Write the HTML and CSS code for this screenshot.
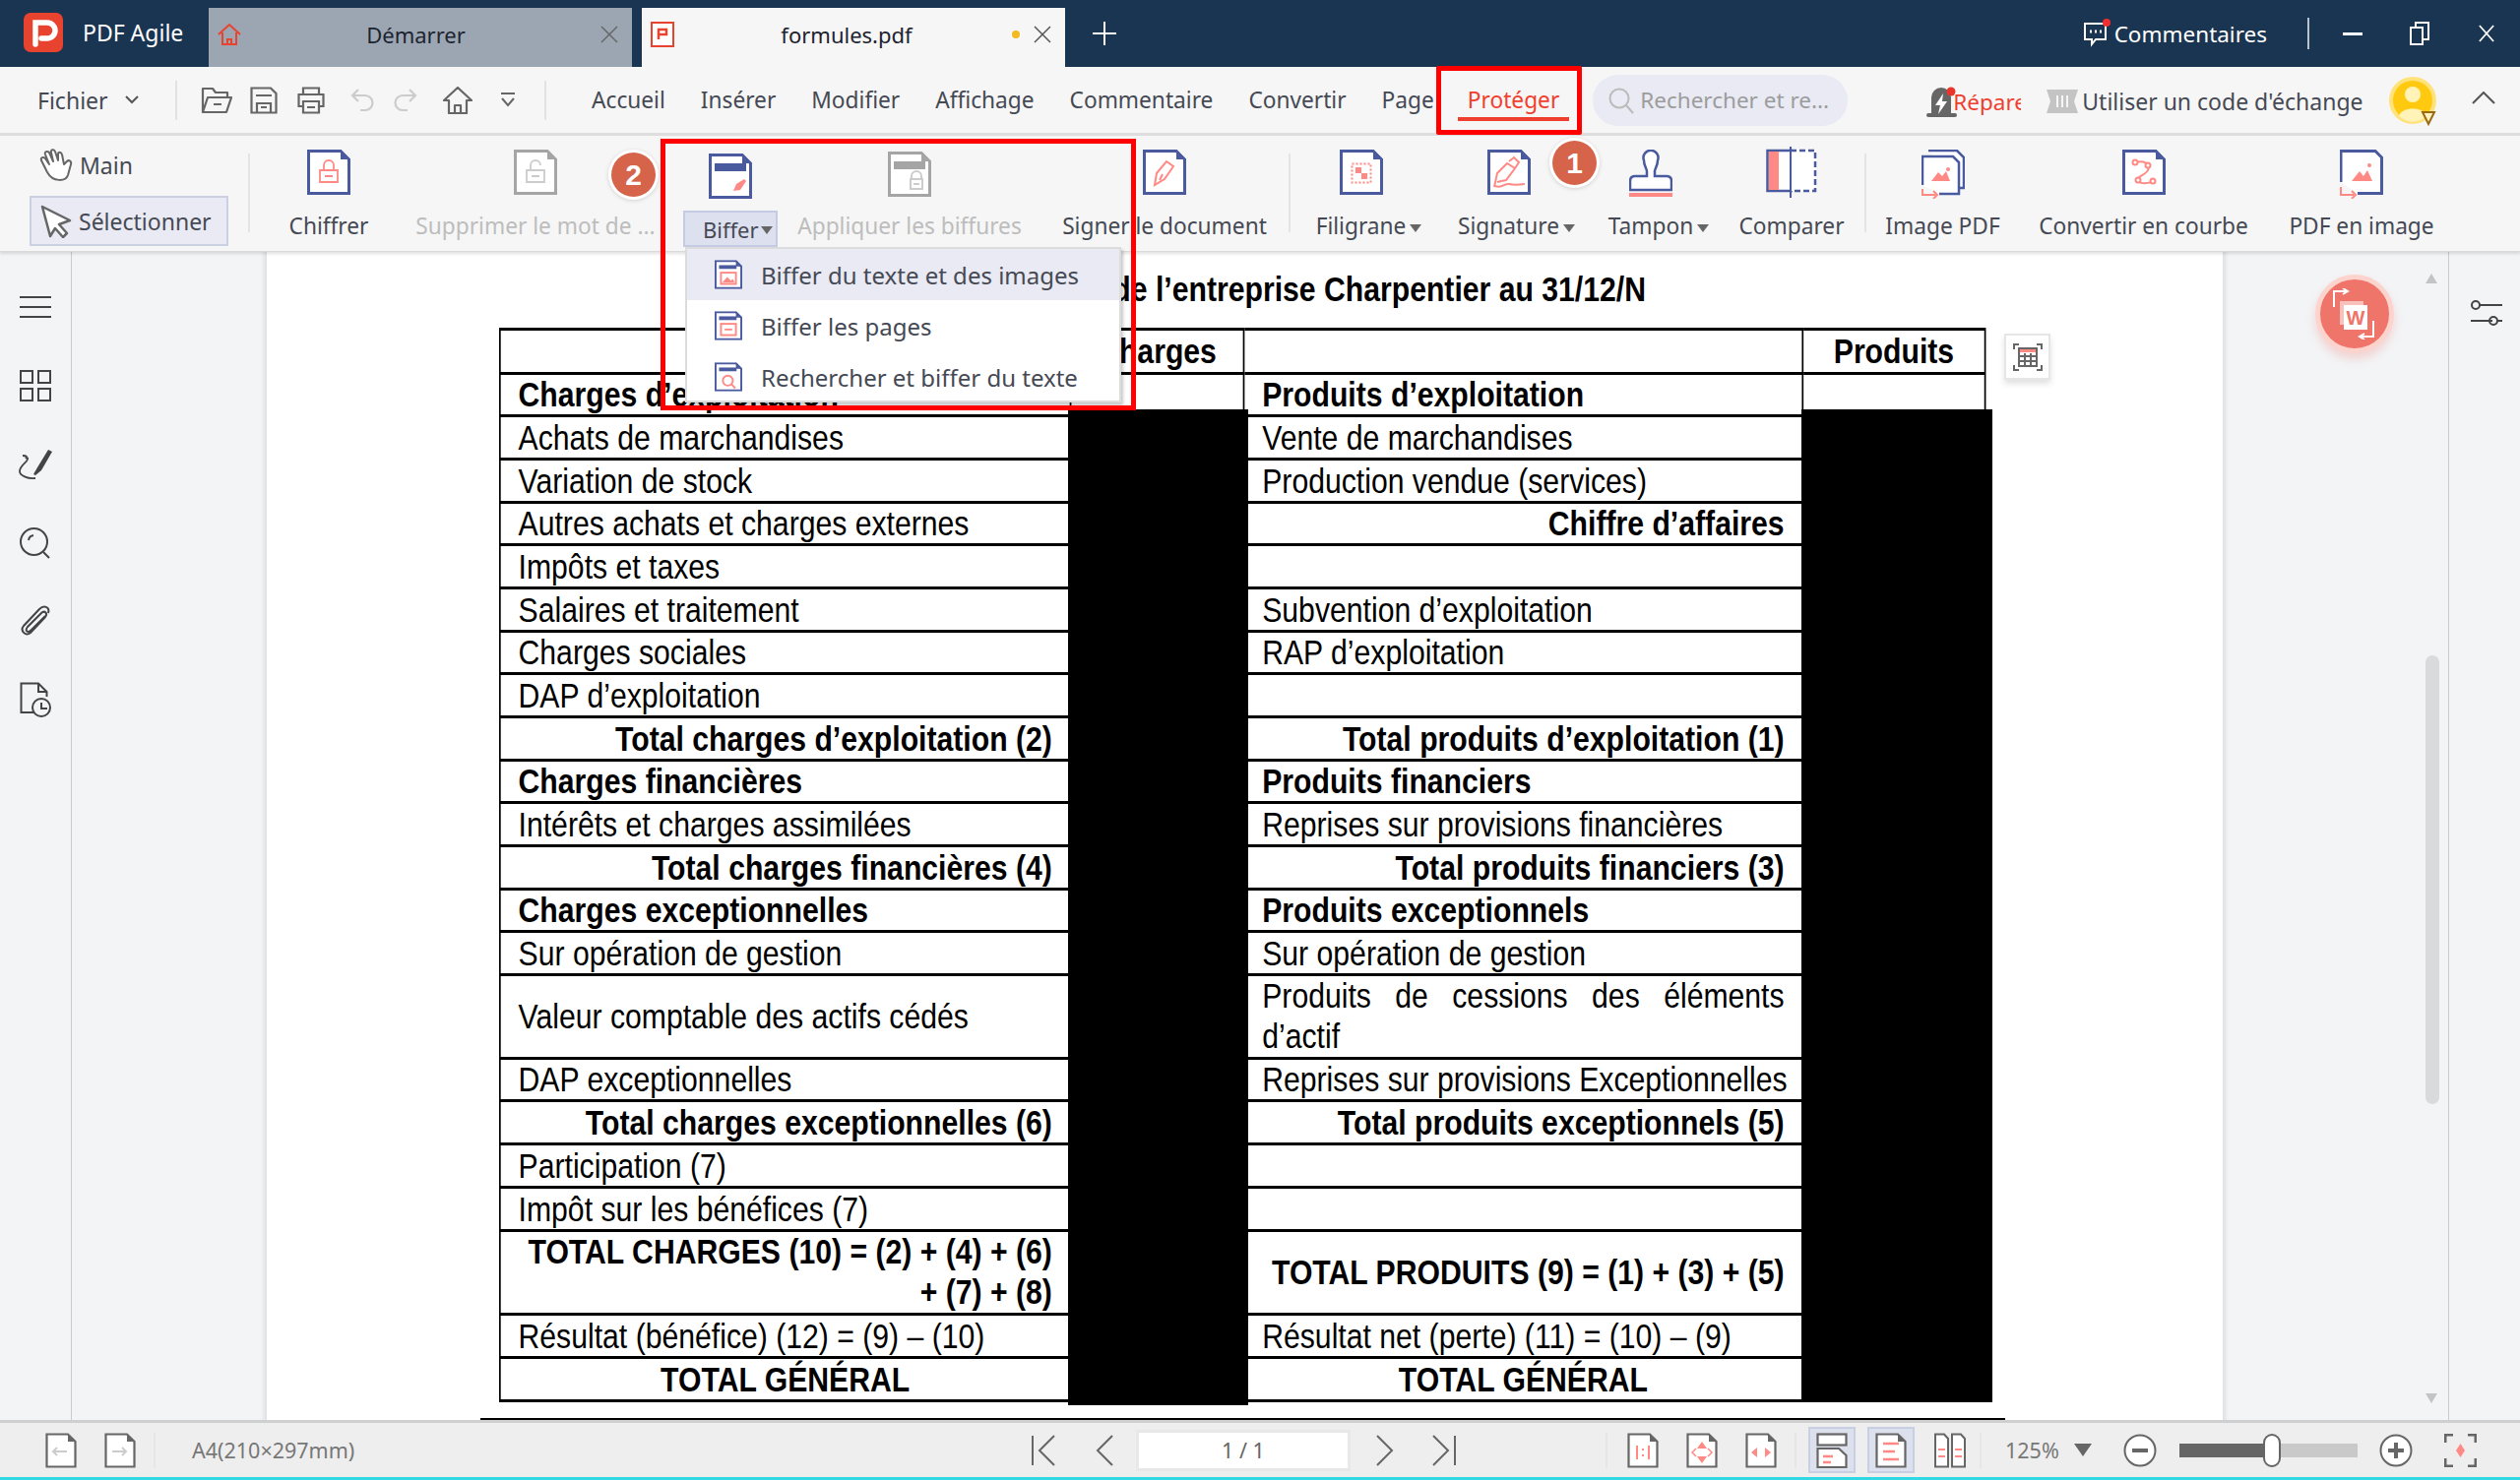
FILE: index.html
```html
<!DOCTYPE html>
<html lang="fr">
<head>
<meta charset="utf-8">
<title>PDF Agile</title>
<link rel="stylesheet" href="styles.css">
</head>
<body>
<svg class="defs" width="0" height="0" aria-hidden="true">
  <symbol id="doc" viewBox="0 0 44 46"><path d="M1.5 1.5H34L42.5 10V44.5H1.5Z" fill="#fff" stroke="#4a5a9e" stroke-width="3"/><path d="M34 0L44 10H34Z" fill="#4a5a9e"/></symbol>
  <symbol id="docg" viewBox="0 0 44 46"><path d="M1.5 1.5H34L42.5 10V44.5H1.5Z" fill="#fff" stroke="#a5a5a5" stroke-width="3"/><path d="M34 0L44 10H34Z" fill="#a5a5a5"/></symbol>
  <symbol id="sdoc" viewBox="0 0 32 36"><path d="M1.5 1.5H23L30.500 9V34.500H1.500Z" fill="#fff" stroke="#666" stroke-width="2.200"/><path d="M23 1L31 9H23Z" fill="#666"/></symbol>
</svg>

<header class="titlebar">
  <div class="app">
    <svg class="logo" viewBox="0 0 40 40"><rect width="40" height="40" rx="7" fill="#e8432f"/><path d="M12 32V10H24A8 8 0 0 1 24 26H18" fill="none" stroke="#fff" stroke-width="5.500" stroke-linecap="round"/></svg>
    <span class="app-name">PDF Agile</span>
  </div>
  <div class="tab tab-off">
    <svg class="tab-ico" width="24" height="24" viewBox="0 0 24 24"><path d="M1 12L12 2L23 12M5 10V22H19V10M10 22V17H14V22" fill="none" stroke="#e8432f" stroke-width="2"/></svg>
    <span class="tab-label">Démarrer</span>
    <svg class="tab-x" width="18" height="18" viewBox="0 0 18 18"><path d="M1 1L17 17M17 1L1 17" stroke="#666" stroke-width="1.500"/></svg>
  </div>
  <div class="tab tab-on">
    <svg class="tab-ico" width="24" height="26" viewBox="0 0 24 26"><rect x="1" y="1" width="22" height="24" fill="#fff" stroke="#e8432f" stroke-width="2"/><path d="M8 18V8H16V13H9" fill="none" stroke="#e8432f" stroke-width="2.500"/></svg>
    <span class="tab-label">formules.pdf</span>
    <i class="tab-dot"></i>
    <svg class="tab-x" width="18" height="18" viewBox="0 0 18 18"><path d="M1 1L17 17M17 1L1 17" stroke="#555" stroke-width="1.500"/></svg>
  </div>
  <svg class="tab-plus" width="24" height="24" viewBox="0 0 24 24"><path d="M12 0V24M0 12H24" stroke="#fff" stroke-width="2"/></svg>
  <div class="title-right">
    <svg width="30" height="30" viewBox="0 0 30 30"><path d="M3 6H24V22H14L10 27V22H3Z" fill="#1a3552" stroke="#fff" stroke-width="2"/><path d="M8 14H10M13 14H15M18 14H20" stroke="#fff" stroke-width="3"/><circle cx="25" cy="5" r="4" fill="#ef2f2f"/></svg>
    <span class="title-comments">Commentaires</span>
    <i class="title-sep"></i>
    <svg class="win-min" width="20" height="3" viewBox="0 0 20 3"><rect width="20" height="3" fill="#fff"/></svg>
    <svg class="win-max" width="20" height="24" viewBox="0 0 20 24"><path d="M6 6V1H19V18H13M1 6H13V23H1Z" fill="none" stroke="#fff" stroke-width="2"/></svg>
    <svg class="win-x" width="16" height="20" viewBox="0 0 18 20"><path d="M1 1L17 19M17 1L1 19" stroke="#fff" stroke-width="2"/></svg>
  </div>
</header>

<nav class="menubar">
  <span class="fichier">Fichier</span>
  <svg class="chev" width="14" height="9" viewBox="0 0 14 9"><path d="M1 1L7 7L13 1" fill="none" stroke="#555" stroke-width="2"/></svg>
  <i class="vsep vsep-a"></i>
  <div class="qa">
    <svg width="32" height="28" viewBox="0 0 32 28"><path d="M2 26V2H12L15 6H27V11M2 26H26L31 11H7Z" fill="none" stroke="#666" stroke-width="2.200" stroke-linejoin="round"/><path d="M13 18H21" stroke="#666" stroke-width="2"/></svg>
    <svg width="28" height="28" viewBox="0 0 28 28"><path d="M1.500 1.500H21L26.500 7V26.500H1.500Z" fill="none" stroke="#666" stroke-width="2.200"/><path d="M6 9H22M7 26V17H21V26M11 21H17" fill="none" stroke="#666" stroke-width="2.200"/></svg>
    <svg width="28" height="28" viewBox="0 0 28 28"><path d="M6 8V1.500H22V8M6 20H1.500V8H26.500V20H22M6 15H22V26.500H6Z" fill="none" stroke="#666" stroke-width="2.200"/><path d="M10 21H18" stroke="#666" stroke-width="2"/></svg>
    <svg width="24" height="24" viewBox="0 0 24 24"><path d="M8 1L2 7L8 13M2 7H15A7.500 7.500 0 0 1 15 22H10" fill="none" stroke="#ccc" stroke-width="2.200"/></svg>
    <svg width="24" height="24" viewBox="0 0 24 24"><path d="M16 1L22 7L16 13M22 7H9A7.500 7.500 0 0 0 9 22H14" fill="none" stroke="#ccc" stroke-width="2.200"/></svg>
    <svg width="30" height="28" viewBox="0 0 30 28"><path d="M1 14L15 1L29 14H24V27H6V14ZM12 27V19H18V27" fill="none" stroke="#666" stroke-width="2.200" stroke-linejoin="round"/></svg>
    <svg class="qa-more" width="16" height="16" viewBox="0 0 16 16"><path d="M1 1H15M2 6L8 13L14 6" fill="none" stroke="#666" stroke-width="2"/></svg>
  </div>
  <i class="vsep vsep-b"></i>
  <div class="menu-items">
    <span>Accueil</span><span>Insérer</span><span>Modifier</span><span>Affichage</span><span>Commentaire</span><span>Convertir</span><span>Page</span>
  </div>
  <span class="menu-active">Protéger</span>
  <div class="search">
    <svg width="26" height="28" viewBox="0 0 26 28"><circle cx="11" cy="12" r="9.500" fill="none" stroke="#bbb" stroke-width="2"/><path d="M18 19L25 27" stroke="#bbb" stroke-width="2"/></svg>
    <span>Rechercher et re...</span>
  </div>
  <svg class="repair-ico" width="34" height="34" viewBox="0 0 34 34"><path d="M6 29V12A10 10 0 0 1 26 12V29Z" fill="#666"/><rect x="1" y="28" width="31" height="4" rx="2" fill="#666"/><path d="M18 8L10 20H15L13 29L22 16H17Z" fill="#fff"/><circle cx="26" cy="6" r="4.500" fill="#e8342a"/></svg>
  <span class="repair-text">Réparer</span>
  <svg class="ticket" width="32" height="24" viewBox="0 0 32 24"><path d="M0 0H32L28 12L32 24H0L4 12Z" fill="#c4c4c4"/><path d="M11 6V18M16 6V18M21 6V18" stroke="#f6f6f6" stroke-width="2"/></svg>
  <span class="code-text">Utiliser un code d'échange</span>
  <svg class="avatar" width="48" height="50" viewBox="0 0 48 50"><circle cx="24" cy="24" r="24" fill="#ffe27a"/><circle cx="24" cy="24" r="20" fill="#ffc90f"/><circle cx="24" cy="18" r="8" fill="#fff3b8"/><path d="M10 40C12 30 36 30 38 40A20 20 0 0 1 10 40Z" fill="#fff3b8"/><path d="M34 36H46L40 48Z" fill="#fff2c0" stroke="#9a6a10" stroke-width="2"/></svg>
  <svg class="collapse" width="24" height="13" viewBox="0 0 24 13"><path d="M1 12L12 1L23 12" fill="none" stroke="#555" stroke-width="2"/></svg>
</nav>

<section class="ribbon">
  <div class="ribbon-left">
    <div class="hand-row">
      <svg width="34" height="34" viewBox="0 0 34 34"><path d="M8 24L2 12C1 9 4 8 6 10L10 16L6 6C5 3 8 2 10 4L14 13L12 4C11 1 15 0 16 3L19 12L19 6C19 3 22 3 23 6L25 16L28 13C30 11 33 13 32 16L29 27C27 33 14 35 8 24Z" fill="#fff" stroke="#666" stroke-width="2" stroke-linejoin="round"/></svg>
      <span>Main</span>
    </div>
    <div class="select-btn">
      <svg width="32" height="34" viewBox="0 0 32 34"><path d="M2 2L30 16L19 20L27 29L23 33L15 24L10 32Z" fill="#fff" stroke="#666" stroke-width="2.500" stroke-linejoin="round"/></svg>
      <span>Sélectionner</span>
    </div>
  </div>

  <div class="ri ri-chiffrer">
    <svg width="44" height="46"><use href="#doc"/><path d="M17 21V16A5 5 0 0 1 27 16V21M13 21H31V33H13ZM18 27H26" fill="none" stroke="#ff8a85" stroke-width="1.800"/></svg>
    <span class="lbl">Chiffrer</span>
  </div>
  <div class="ri ri-supprimer">
    <svg width="44" height="46"><use href="#docg"/><path d="M17 21V16A5 5 0 0 1 27 16M13 21H31V33H13ZM18 27H26" fill="none" stroke="#ccc" stroke-width="1.800"/></svg>
    <span class="lbl off">Supprimer le mot de ...</span>
  </div>
  <div class="ri ri-biffer">
    <svg class="ico-low" width="44" height="46"><use href="#doc"/><rect x="6" y="10" width="32" height="8" fill="#4a5a9e"/><path d="M25 38L28 31L36 26L38 28L32 37Z" fill="#ff8a85"/></svg>
    <span class="lbl biffer-btn drop">Biffer</span>
  </div>
  <div class="ri ri-appliquer">
    <svg class="ico-mid" width="44" height="46"><use href="#docg"/><rect x="6" y="10" width="32" height="8" fill="#a5a5a5"/><path d="M24 28V25A5 5 0 0 1 34 25V28M23 28H35V38H23ZM26 33H32" fill="none" stroke="#ccc" stroke-width="2"/></svg>
    <span class="lbl off">Appliquer les biffures</span>
  </div>
  <div class="ri ri-signer">
    <svg width="44" height="46"><use href="#doc"/><path d="M12 36L14 24L24 12L31 17L22 30ZM17 31L20 25" fill="none" stroke="#ff8a85" stroke-width="2"/></svg>
    <span class="lbl">Signer le document</span>
  </div>
  <i class="rsep rsep-a"></i>
  <div class="ri ri-filigrane">
    <svg width="44" height="46"><use href="#doc"/><rect x="12.500" y="14.500" width="19" height="19" fill="none" stroke="#ff8a85" stroke-width="2" stroke-dasharray="2 2"/><rect x="16" y="18" width="6" height="6" fill="#ff8a85"/><rect x="22" y="24" width="6" height="6" fill="#ff8a85"/></svg>
    <span class="lbl drop">Filigrane</span>
  </div>
  <div class="ri ri-signature">
    <svg width="44" height="46"><use href="#doc"/><path d="M7 38L10 24L20 14L28 19L19 31L10 33M22 12L27 8L32 13L28 19" fill="none" stroke="#ff8a85" stroke-width="2"/><path d="M8 37C14 40 18 34 22 35C26 36 30 36 38 35" fill="none" stroke="#ff8a85" stroke-width="2"/></svg>
    <span class="lbl drop">Signature</span>
  </div>
  <div class="ri ri-tampon">
    <svg width="44" height="48" viewBox="0 0 44 48"><path d="M15 11A7.500 7.500 0 1 1 29 11C29 17 26 19 26 22V27H38C41 27 43 28 43 32V41H1V32C1 28 3 27 6 27H18V22C18 19 15 17 15 11Z" fill="#fff" stroke="#4a5a9e" stroke-width="2.500"/><rect y="44" width="44" height="4" fill="#ff8a85"/></svg>
    <span class="lbl drop">Tampon</span>
  </div>
  <div class="ri ri-comparer">
    <svg width="52" height="54" viewBox="0 0 52 54"><rect x="1.500" y="5" width="24" height="41" fill="#fff" stroke="#4a5a9e" stroke-width="2.500"/><rect x="3" y="6" width="10" height="39" fill="#ff8a85"/><path d="M25 5H50V46H25" fill="#fff" stroke="#4a5a9e" stroke-width="2.500" stroke-dasharray="6 3"/><path d="M25 1V53" stroke="#4a5a9e" stroke-width="2"/></svg>
    <span class="lbl">Comparer</span>
  </div>
  <i class="rsep rsep-b"></i>
  <div class="ri ri-image">
    <svg width="44" height="50" viewBox="0 0 44 50"><path d="M7 1H36L43 8V39H38" fill="#fff" stroke="#4a5a9e" stroke-width="2.500"/><path d="M1 36V7H32L38 13V45H18" fill="#fff" stroke="#4a5a9e" stroke-width="2.500"/><path d="M10 32L17 23L21 27L25 22L29 32Z" fill="#ff8a85"/><circle cx="27" cy="20" r="2" fill="#ff8a85"/><path d="M1 40V46H14M12 42L16 46L12 50" fill="none" stroke="#ff8a85" stroke-width="2"/></svg>
    <span class="lbl">Image PDF</span>
  </div>
  <div class="ri ri-courbe">
    <svg width="44" height="46"><use href="#doc"/><path d="M13 13C22 11 29 14 26 21C24 26 14 27 16 32C18 35 27 35 31 32" fill="none" stroke="#ff8a85" stroke-width="2"/><circle cx="13" cy="13" r="2.500" fill="#fff" stroke="#ff8a85" stroke-width="2"/><circle cx="26" cy="16" r="2.500" fill="#fff" stroke="#ff8a85" stroke-width="2"/><circle cx="16" cy="31" r="2.500" fill="#fff" stroke="#ff8a85" stroke-width="2"/><circle cx="31" cy="32" r="2.500" fill="#fff" stroke="#ff8a85" stroke-width="2"/></svg>
    <span class="lbl">Convertir en courbe</span>
  </div>
  <div class="ri ri-pdfimg">
    <svg width="44" height="50" viewBox="0 0 44 50"><path d="M1 33V1.500H36L42.500 8V44.500H18" fill="#fff" stroke="#4a5a9e" stroke-width="3"/><path d="M12 32L20 22L24 27L28 21L33 32Z" fill="#ff8a85"/><circle cx="30" cy="16" r="2" fill="#ff8a85"/><path d="M1 38V46H14M12 42L16 46L12 50" fill="none" stroke="#ff8a85" stroke-width="2"/></svg>
    <span class="lbl">PDF en image</span>
  </div>
  <b class="badge badge-two">2</b>
  <b class="badge badge-one">1</b>
</section>

<main class="workspace">
  <aside class="leftbar">
    <svg width="32" height="22" viewBox="0 0 32 22"><path d="M0 1H32M0 11H32M0 21H32" stroke="#444" stroke-width="2"/></svg>
    <svg width="32" height="32" viewBox="0 0 32 32"><path d="M1 1H13V13H1ZM19 1H31V13H19ZM1 19H13V31H1ZM19 19H31V31H19Z" fill="none" stroke="#444" stroke-width="2"/></svg>
    <svg width="34" height="32" viewBox="0 0 34 32"><path d="M7 10C9 8 8 7 4 7M9 9C11 13 1 16 1 23C1 27 9 31 17 30" fill="none" stroke="#444" stroke-width="1.800"/><path d="M15 26L19 19L30 1L34 3L23 22L17 27Z" fill="#444"/></svg>
    <svg width="32" height="32" viewBox="0 0 32 32"><circle cx="14.500" cy="14.500" r="13.500" fill="none" stroke="#444" stroke-width="2"/><path d="M24 25L30 31M9 13A6 6 0 0 1 14 8" fill="none" stroke="#444" stroke-width="2"/></svg>
    <svg width="30" height="33" viewBox="0 0 30 33"><path d="M25 11L11 25C7 29 4 26 7 22L21 8C24 5 28 8 25 12L10 28C5 32 -1 26 3 21L19 4C23 0 30 1 28 8" fill="none" stroke="#444" stroke-width="2"/></svg>
    <svg width="32" height="36" viewBox="0 0 32 36"><path d="M14 31H1.500V1.500H19L27.500 10V15M19 1.500V10H27.500" fill="none" stroke="#444" stroke-width="2"/><circle cx="22" cy="26" r="9" fill="#f3f4f6" stroke="#444" stroke-width="2"/><path d="M22 21V27H28" fill="none" stroke="#444" stroke-width="2"/></svg>
  </aside>
  <div class="gutter-left"></div>

  <article class="page">
    <h1 class="doc-title">Compte de résultat de l’entreprise Charpentier au 31/12/N</h1>
    <table class="results">
      <colgroup><col class="c1"><col class="c2"><col class="c3"><col class="c4"></colgroup>
      <tr class="head"><th></th><th class="th-charges">Charges</th><th></th><th>Produits</th></tr>
      <tr><td class="st">Charges d’exploitation</td><td></td><td class="st">Produits d’exploitation</td><td></td></tr>
      <tr><td>Achats de marchandises</td><td></td><td>Vente de marchandises</td><td></td></tr>
      <tr><td>Variation de stock</td><td></td><td>Production vendue (services)</td><td></td></tr>
      <tr><td>Autres achats et charges externes</td><td></td><td class="st rt">Chiffre d’affaires</td><td></td></tr>
      <tr><td>Impôts et taxes</td><td></td><td></td><td></td></tr>
      <tr><td>Salaires et traitement</td><td></td><td>Subvention d’exploitation</td><td></td></tr>
      <tr><td>Charges sociales</td><td></td><td>RAP d’exploitation</td><td></td></tr>
      <tr><td>DAP d’exploitation</td><td></td><td></td><td></td></tr>
      <tr><td class="st rt">Total charges d’exploitation (2)</td><td></td><td class="st rt">Total produits d’exploitation (1)</td><td></td></tr>
      <tr><td class="st">Charges financières</td><td></td><td class="st">Produits financiers</td><td></td></tr>
      <tr><td>Intérêts et charges assimilées</td><td></td><td>Reprises sur provisions financières</td><td></td></tr>
      <tr><td class="st rt">Total charges financières (4)</td><td></td><td class="st rt">Total produits financiers (3)</td><td></td></tr>
      <tr><td class="st">Charges exceptionnelles</td><td></td><td class="st">Produits exceptionnels</td><td></td></tr>
      <tr><td>Sur opération de gestion</td><td></td><td>Sur opération de gestion</td><td></td></tr>
      <tr class="tall"><td>Valeur comptable des actifs cédés</td><td></td><td class="just">Produits de cessions des éléments d’actif</td><td></td></tr>
      <tr><td>DAP exceptionnelles</td><td></td><td>Reprises sur provisions Exceptionnelles</td><td></td></tr>
      <tr><td class="st rt">Total charges exceptionnelles (6)</td><td></td><td class="st rt">Total produits exceptionnels (5)</td><td></td></tr>
      <tr><td>Participation (7)</td><td></td><td></td><td></td></tr>
      <tr><td>Impôt sur les bénéfices (7)</td><td></td><td></td><td></td></tr>
      <tr class="tall"><td class="st rt">TOTAL CHARGES (10) = (2) + (4) + (6)<br>+ (7) + (8)</td><td></td><td class="st rt">TOTAL PRODUITS (9) = (1) + (3) + (5)</td><td></td></tr>
      <tr><td>Résultat (bénéfice) (12) = (9) – (10)</td><td></td><td>Résultat net (perte) (11) = (10) – (9)</td><td></td></tr>
      <tr><td class="st ct">TOTAL GÉNÉRAL</td><td></td><td class="st ct">TOTAL GÉNÉRAL</td><td></td></tr>
    </table>
    <div class="next-table"></div>
    <i class="redact redact-a"></i>
    <i class="redact redact-b"></i>
    <div class="calc-btn">
      <svg width="30" height="28" viewBox="0 0 30 28"><path d="M1 6V1H6M24 1H29V6M1 22V27H6M24 27H29V22" fill="none" stroke="#666" stroke-width="2"/><rect x="6" y="5" width="18" height="18" fill="#fff" stroke="#666" stroke-width="2"/><rect x="7" y="6" width="16" height="3" fill="#ff8a85"/><path d="M6 13H24M6 18H24M12 10V23M18 10V23" stroke="#666" stroke-width="2"/></svg>
    </div>
  </article>

  <div class="gutter-right">
    <i class="sb-up"></i>
    <i class="sb-thumb"></i>
    <i class="sb-down"></i>
    <div class="convert-fab">
      <svg width="48" height="52" viewBox="0 0 48 52"><path d="M4 19V3H18M13 0L18 3L13 6" fill="none" stroke="#fff" stroke-width="2"/><rect x="10" y="13" width="24" height="24" fill="#f9c1bb"/><rect x="14" y="17" width="24" height="25" fill="#fff"/><text x="26" y="37" class="fab-w">W</text><path d="M44 33V49H30M35 46L30 49L35 52" fill="none" stroke="#fff" stroke-width="2"/></svg>
    </div>
  </div>
  <aside class="rightbar">
    <svg width="32" height="26" viewBox="0 0 32 26"><circle cx="5" cy="5" r="4" fill="none" stroke="#444" stroke-width="2"/><path d="M9 5H32M0 21H22" stroke="#444" stroke-width="2"/><circle cx="23" cy="21" r="4" fill="none" stroke="#444" stroke-width="2"/><path d="M27 21H32" stroke="#444" stroke-width="2"/></svg>
  </aside>
</main>

<footer class="statusbar">
  <div class="st-left">
    <svg width="32" height="36" viewBox="0 0 32 36"><use href="#sdoc"/><path d="M8 19H22M12 15L8 19L12 23" fill="none" stroke="#ccc" stroke-width="2"/></svg>
    <svg class="st-next" width="32" height="36" viewBox="0 0 32 36"><use href="#sdoc"/><path d="M8 19H22M18 15L22 19L18 23" fill="none" stroke="#ccc" stroke-width="2"/></svg>
    <i class="st-sep"></i>
    <span class="paper">A4(210×297mm)</span>
  </div>
  <div class="st-nav">
    <svg width="25" height="32" viewBox="0 0 25 32"><path d="M2 1V31M24 1L9 16L24 31" fill="none" stroke="#666" stroke-width="2"/></svg>
    <svg class="nav-prev" width="20" height="32" viewBox="0 0 20 32"><path d="M18 1L3 16L18 31" fill="none" stroke="#666" stroke-width="2"/></svg>
    <span class="page-input">1 / 1</span>
    <svg class="nav-next" width="20" height="32" viewBox="0 0 20 32"><path d="M2 1L17 16L2 31" fill="none" stroke="#666" stroke-width="2"/></svg>
    <svg class="nav-last" width="25" height="32" viewBox="0 0 25 32"><path d="M23 1V31M1 1L16 16L1 31" fill="none" stroke="#666" stroke-width="2"/></svg>
  </div>
  <div class="st-right">
    <i class="st-sep"></i>
    <svg class="v1" width="32" height="36" viewBox="0 0 32 36"><use href="#sdoc"/><path d="M10 13V27M22 13V27M16 16V18M16 22V24" fill="none" stroke="#ff8a85" stroke-width="2"/></svg>
    <svg class="v2" width="32" height="36" viewBox="0 0 32 36"><use href="#sdoc"/><path d="M16 9L21 16H11ZM16 31L21 24H11Z" fill="#ff8a85"/><path d="M10 16L6 20L10 24M22 16L26 20L22 24" fill="none" stroke="#ff8a85" stroke-width="1.500"/></svg>
    <svg class="v2" width="32" height="36" viewBox="0 0 32 36"><use href="#sdoc"/><path d="M6 20L12 15V25ZM26 20L20 15V25Z" fill="#ff8a85"/></svg>
    <i class="st-sep sep-v"></i>
    <span class="view-on">
      <svg width="32" height="36" viewBox="0 0 32 36"><rect x="1.500" y="1.500" width="29" height="11" fill="#fff" stroke="#666" stroke-width="2.200"/><path d="M1.500 16H23L30.500 23V35H1.500Z" fill="#fff" stroke="#666" stroke-width="2.200"/><path d="M7 24H17M7 30H15" stroke="#ff8a85" stroke-width="2.500"/></svg>
    </span>
    <span class="view-on vo2">
      <svg width="32" height="36" viewBox="0 0 32 36"><use href="#sdoc"/><path d="M8 11H24M8 19H20M8 27H24" stroke="#ff8a85" stroke-width="2.500"/></svg>
    </span>
    <svg class="v3" width="32" height="36" viewBox="0 0 32 36"><path d="M1 1.500H10L14 6V34.500H1ZM18 1.500H27L31 6V34.500H18Z" fill="#fff" stroke="#666" stroke-width="2"/><path d="M4 17H11M4 24H11M21 17H28M21 24H28" stroke="#ff8a85" stroke-width="2"/></svg>
    <i class="st-sep sep-z"></i>
    <span class="zoom-val">125%</span>
    <i class="zoom-caret"></i>
    <svg class="z-minus" width="34" height="34" viewBox="0 0 34 34"><circle cx="17" cy="17" r="15.500" fill="#fff" stroke="#666" stroke-width="2"/><path d="M9 17H25" stroke="#666" stroke-width="4"/></svg>
    <div class="slider"><i class="slider-fill"></i><i class="slider-knob"></i></div>
    <svg class="z-plus" width="34" height="34" viewBox="0 0 34 34"><circle cx="17" cy="17" r="15.500" fill="#fff" stroke="#666" stroke-width="2"/><path d="M9 17H25M17 9V25" stroke="#666" stroke-width="4"/></svg>
    <svg class="z-fit" width="33" height="34" viewBox="0 0 33 34"><path d="M1 9V1H9M24 1H32V9M1 25V33H9M24 33H32V25" fill="none" stroke="#666" stroke-width="3"/><path d="M16.500 10L21 17L16.500 24L12 17Z" fill="#ff8a85"/></svg>
  </div>
</footer>

<div class="dropdown">
  <div class="dd-item dd-hover">
    <svg width="28" height="32" viewBox="0 0 44 46"><use href="#doc"/><rect x="7" y="8" width="28" height="6" fill="#4a5a9e"/><rect x="10" y="20" width="24" height="18" fill="#fff" stroke="#ff8a85" stroke-width="3"/><path d="M12 36L20 27L26 33L29 30L32 36Z" fill="#ff8a85"/></svg>
    <span>Biffer du texte et des images</span>
  </div>
  <div class="dd-item">
    <svg width="28" height="32" viewBox="0 0 44 46"><use href="#doc"/><rect x="7" y="8" width="28" height="6" fill="#4a5a9e"/><rect x="10" y="20" width="24" height="18" fill="none" stroke="#ff8a85" stroke-width="3"/><path d="M16 29H28" stroke="#ff8a85" stroke-width="3"/></svg>
    <span>Biffer les pages</span>
  </div>
  <div class="dd-item">
    <svg width="28" height="32" viewBox="0 0 44 46"><use href="#doc"/><rect x="7" y="8" width="28" height="6" fill="#4a5a9e"/><circle cx="21" cy="29" r="8" fill="none" stroke="#ff8a85" stroke-width="3"/><path d="M27 35L33 41" stroke="#ff8a85" stroke-width="3"/></svg>
    <span>Rechercher et biffer du texte</span>
  </div>
</div>

<i class="callout callout-tab"></i>
<i class="callout callout-menu"></i>
</body>
</html>
```

FILE: styles.css
```css
* { box-sizing: border-box; }
html, body { margin: 0; padding: 0; }
body {
  position: relative;
  width: 2560px;
  height: 1504px;
  overflow: hidden;
  display: flex;
  flex-direction: column;
  font-family: "Noto Sans", sans-serif;
  font-size: 23px;
  color: #454954;
  background: #f3f4f6;
}
i { display: block; font-style: normal; }
svg { display: block; flex: none; }
.defs { position: absolute; }

/* title bar */
.titlebar {
  flex: none;
  height: 68px;
  display: flex;
  align-items: flex-end;
  background: #1a3552;
}
.app {
  flex: none;
  width: 212px;
  height: 68px;
  padding-left: 24px;
  display: flex;
  align-items: center;
  gap: 20px;
  color: #fff;
}
.logo { width: 40px; height: 40px; margin-top: -2px; }
.app-name { margin-top: -2px; }
.tab {
  flex: none;
  width: 430px;
  height: 60px;
  display: flex;
  align-items: center;
  color: #1d2330;
  font-size: 22px;
  padding: 0 14px 6px 9px;
}
.tab-off { background: #9ba6b2; margin-right: 10px; }
.tab-on { background: #f6f6f6; }
.tab-label { flex: 1; text-align: center; }
.tab-off .tab-label { padding-right: 10px; }
.tab-on .tab-label { padding-left: 7px; }
.tab-dot {
  width: 8px;
  height: 8px;
  border-radius: 50%;
  background: #f5b921;
  margin: 0 14px 0 0;
}
.tab-plus { margin: 0 0 22px 28px; }
.title-right {
  margin-left: auto;
  height: 68px;
  display: flex;
  align-items: center;
  color: #fff;
  padding-right: 26px;
  font-size: 22.500px;
}
.title-right > svg:first-child { margin-top: -2px; }
.title-comments { margin-left: 3px; }
.title-sep { width: 2px; height: 32px; background: #b9c3cf; margin: 0 34px 0 41px; }
.win-min { margin-right: 48px; }
.win-max { margin-right: 50px; }

/* menu bar */
.menubar {
  flex: none;
  height: 70px;
  display: flex;
  align-items: center;
  background: #f6f6f6;
  border-bottom: 3px solid #dedede;
  padding-left: 38px;
  position: relative;
}
.fichier { width: 89px; }
.chev { margin-right: 37px; }
.vsep { width: 2px; height: 40px; background: #e2e2e2; }
.qa { display: flex; align-items: center; margin-left: 24px; gap: 20px; }
.qa svg:nth-child(1) { margin-right: -2px; }
.qa svg:nth-child(3) { margin-right: 6px; }
.qa svg:nth-child(6) { margin: 0 8px 0 6px; }
.vsep-b { margin-left: 29px; }
.menu-items { display: flex; gap: 36px; margin-left: 46px; font-size: 22.700px; }
.menu-active {
  align-self: flex-start;
  margin: 8px 0 0 24px;
  height: 47px;
  padding: 0 10px;
  font-size: 22.700px;
  color: #f0402f;
  border-bottom: 4px solid #ef3e2e;
  line-height: 52px;
}
.search {
  margin-left: 24px;
  width: 259px;
  height: 52px;
  border-radius: 26px;
  background: #e9eaf3;
  display: flex;
  align-items: center;
  gap: 6px;
  padding-left: 16px;
  color: #9c9c9c;
  font-size: 22.500px;
  white-space: nowrap;
}
.repair-ico { margin-left: 79px; margin-right: -6px; margin-top: 4px; }
.repair-text { width: 69px; overflow: hidden; color: #ef3e2e; font-size: 22.500px; margin-top: 4px; }
.ticket { margin-left: 26px; margin-top: 2px; }
.code-text { margin-left: 4px; width: 285px; white-space: nowrap; margin-top: 3px; }
.avatar { margin-left: 27px; margin-top: 2px; }
.collapse { margin-left: 36px; margin-top: -4px; }

/* ribbon */
.ribbon {
  flex: none;
  position: relative;
  height: 118px;
  display: flex;
  background: #f6f6f6;
  border-bottom: 1px solid #dadada;
  box-shadow: 0 2px 3px rgba(0,0,0,.12);
  z-index: 1;
}
.ribbon-left {
  flex: none;
  position: relative;
  width: 254px;
  padding: 12px 0 0 30px;
}
.ribbon-left::after {
  content: "";
  position: absolute;
  right: 0;
  top: 18px;
  width: 2px;
  height: 80px;
  background: #e4e4e4;
}
.hand-row { display: flex; align-items: center; gap: 7px; margin-left: 10px; height: 36px; }
.select-btn {
  width: 202px;
  height: 51px;
  margin-top: 13px;
  display: flex;
  align-items: center;
  gap: 7px;
  padding-left: 9px;
  background: #e9eaf3;
  border: 2px solid #cbd1e3;
}
.ri {
  flex: none;
  position: relative;
  height: 115px;
  padding-top: 14px;
  display: flex;
  flex-direction: column;
  align-items: center;
  white-space: nowrap;
}
.lbl {
  position: absolute;
  top: 75px;
  font-size: 22.700px;
  line-height: 34px;
}
.off { color: #bdbdbd; }
.drop::after {
  content: "";
  position: absolute;
  left: 100%;
  top: 15px;
  margin-left: 4px;
  border: 6.500px solid transparent;
  border-top: 8px solid #666;
  border-bottom: 0;
}
.ico-low { margin-top: 4px; }
.ico-mid { margin-top: 2px; }
.biffer-btn {
  top: 76px;
  left: 0;
  width: 96px;
  height: 37px;
  padding-left: 18px;
  background: #dde0ef;
  border: 2px solid #c5cbe2;
  font-size: 22px;
  line-height: 35px;
}
.biffer-btn::after { left: auto; right: 3px; top: 14px; }
.ri-chiffrer { width: 80px; margin-left: 40px; }
.ri-supprimer { width: 246px; margin-left: 47px; }
.ri-biffer { width: 96px; margin-left: 27px; }
.ri-appliquer { width: 228px; margin-left: 20px; }
.ri-signer { width: 210px; margin-left: 40px; }
.rsep { flex: none; width: 2px; height: 80px; margin-top: 18px; background: #e4e4e4; }
.rsep-a { margin-left: 21px; }
.ri-filigrane { width: 87px; margin-left: 28px; }
.ri-signature { width: 101px; margin-left: 56px; }
.ri-tampon { width: 84px; margin-left: 52px; }
.ri-comparer { width: 104px; margin-left: 49px; }
.ri-comparer svg { margin-top: -4px; }
.rsep-b { margin-left: 22px; }
.ri-image { width: 115px; margin-left: 20px; }
.ri-courbe { width: 213px; margin-left: 40px; }
.ri-pdfimg { width: 148px; margin-left: 41px; }
.badge {
  position: absolute;
  width: 45px;
  height: 45px;
  border-radius: 50%;
  background: #d6644a;
  box-shadow: 0 0 0 3px #fff, 0 1px 4px 3px rgba(0,0,0,.15);
  color: #fff;
  font-family: "Liberation Sans", sans-serif;
  font-size: 30px;
  line-height: 45px;
  text-align: center;
}
.badge-two { left: 621px; top: 17px; }
.badge-one { left: 1577px; top: 5px; }

/* workspace */
.workspace { flex: 1; display: flex; min-height: 0; }
.leftbar {
  flex: none;
  width: 73px;
  padding-top: 16.500px;
  border-right: 1px solid #c9cbce;
  display: grid;
  grid-auto-rows: 79.800px;
  place-items: center;
  align-content: start;
  background: #f3f4f6;
}
.gutter-left {
  flex: none;
  width: 198px;
  background: linear-gradient(to right, #f3f4f6 192px, #dfe0e1 198px);
}
.page {
  flex: none;
  position: relative;
  width: 1987px;
  background: #fff;
  overflow: hidden;
  color: #000;
  font-family: "Liberation Sans", sans-serif;
  font-size: 35.500px;
}
.doc-title {
  width: 1401px;
  height: 77px;
  margin: 0;
  line-height: 77px;
  font-size: 35.500px;
  font-weight: 700;
  text-align: right;
  white-space: nowrap;
  transform: scaleX(.85);
  transform-origin: 100% 50%;
}
.results {
  width: 1775px;
  margin-left: 236px;
  table-layout: fixed;
  border-collapse: collapse;
  border: 2px solid #000;
  border-top-width: 3px;
  transform: scaleX(.85);
  transform-origin: 0 0;
}
.c1 { width: 682px; }
.c2 { width: 207px; }
.c3 { width: 668px; }
.c4 { width: 218px; }
.results th, .results td {
  height: 44px;
  padding: 0 21px;
  border: 2px solid #000;
  border-top-width: 3px;
  border-bottom-width: 3px;
  line-height: 36px;
  font-weight: 400;
  white-space: nowrap;
  vertical-align: middle;
}
.results tr:nth-child(3n+2):not(:nth-child(n+20)) td { height: 43px; }
.results th { height: 45px; font-weight: 700; text-align: center; }
.results .th-charges { padding: 0; }
.results .tall td { height: 85px; line-height: 41px; }
.results .st { font-weight: 700; }
.results .rt { text-align: right; }
.results .ct { text-align: center; }
.results .just { white-space: normal; text-align: justify; }
.next-table {
  width: 1549px;
  height: 30px;
  margin: 16px 0 0 217px;
  border: 3px solid #000;
  border-bottom: 0;
}
.redact { position: absolute; background: #000; }
.redact-a { left: 814px; top: 160px; width: 183px; height: 1012px; }
.redact-b { left: 1559px; top: 160px; width: 194px; height: 1009px; }
.calc-btn {
  position: absolute;
  left: 1765px;
  top: 83px;
  width: 47px;
  height: 47px;
  display: flex;
  align-items: center;
  justify-content: center;
  background: #fff;
  border: 2px solid #e6e6e6;
  box-shadow: 0 4px 6px rgba(0,0,0,.12);
}
.gutter-right {
  flex: none;
  position: relative;
  width: 229px;
  background: linear-gradient(to right, #dfe0e1, #f3f4f6 6px);
}
.sb-up, .sb-down {
  position: absolute;
  left: 206px;
  width: 0;
  height: 0;
  border: 6.500px solid transparent;
}
.sb-up { top: 22px; border-top: 0; border-bottom: 10px solid #c4c4c4; }
.sb-down { top: 1160px; border-bottom: 0; border-top: 10px solid #c4c4c4; }
.sb-thumb {
  position: absolute;
  left: 206px;
  top: 410px;
  width: 14px;
  height: 456px;
  border-radius: 7px;
  background: #d9dadb;
}
.convert-fab {
  position: absolute;
  left: 94px;
  top: 23px;
  width: 80px;
  height: 80px;
  padding-right: 3px;
  border-radius: 50%;
  background: #ef7469;
  border: 5px solid #fdd3ce;
  box-shadow: 0 6px 10px rgba(239,116,105,.25);
  display: flex;
  align-items: center;
  justify-content: center;
}
.fab-w { font-family: "Liberation Sans", sans-serif; font-size: 20px; font-weight: 700; fill: #ef7469; text-anchor: middle; }
.rightbar {
  flex: 1;
  padding: 49px 0 0 22px;
  border-left: 1px solid #c9cbce;
  background: #f3f4f6;
}

/* status bar */
.statusbar {
  flex: none;
  height: 61px;
  display: flex;
  align-items: center;
  background: #eeeeee;
  border-top: 3px solid #cfcfcf;
  border-bottom: 3px solid #2fd8e2;
  position: relative;
  z-index: 1;
}
.st-left {
  flex: none;
  width: 1047px;
  padding-left: 46px;
  display: flex;
  align-items: center;
}
.st-next { margin-left: 28px; }
.st-sep { flex: none; width: 2px; height: 36px; background: #e6e6e6; margin-left: 18px; }
.paper { margin-left: 37px; font-size: 21.500px; color: #777; white-space: nowrap; }
.st-nav { flex: none; width: 433px; display: flex; align-items: center; }
.nav-prev { margin-left: 40px; }
.page-input {
  width: 213px;
  height: 36px;
  margin: 0 28px 0 25px;
  background: #fff;
  box-shadow: 0 0 0 3px #e8e8e8;
  text-align: center;
  line-height: 36px;
  font-size: 21.500px;
  color: #666;
}
.nav-last { margin-left: 38px; }
.st-right { flex: none; display: flex; align-items: center; margin-left: 151px; }
.st-right > .st-sep:first-child { margin-left: 0; }
.v1 { margin-left: 20px; }
.v2 { margin-left: 28px; }
.sep-v { margin-left: 18px; }
.view-on {
  flex: none;
  width: 48px;
  height: 47px;
  margin-left: 12px;
  display: flex;
  align-items: center;
  justify-content: center;
  background: #dde1ee;
  border: 2px solid #c9cfe2;
}
.vo2 { margin-left: 12px; }
.v3 { margin-left: 20px; }
.sep-z { margin-left: 14px; }
.zoom-val { margin-left: 24px; width: 70px; font-size: 21.500px; color: #777; }
.zoom-caret {
  width: 0;
  height: 0;
  border: 9px solid transparent;
  border-top: 13px solid #666;
  border-bottom: 0;
}
.z-minus { margin-left: 32px; }
.slider {
  position: relative;
  width: 181px;
  height: 14px;
  margin-left: 23px;
  background: #c9c9c9;
}
.slider-fill { width: 94px; height: 100%; background: #666; }
.slider-knob {
  position: absolute;
  left: 85px;
  top: -10px;
  width: 18px;
  height: 34px;
  border-radius: 9px;
  background: #fff;
  border: 2px solid #666;
}
.z-plus { margin-left: 22px; }
.z-fit { margin-left: 32px; }

/* dropdown & callouts */
.dropdown {
  position: absolute;
  left: 696px;
  top: 251px;
  width: 443px;
  height: 158px;
  background: #fff;
  border: 2px solid #dcdcdc;
  box-shadow: 2px 3px 3px rgba(0,0,0,.22);
  font-size: 24px;
  z-index: 2;
}
.dd-item {
  height: 52px;
  display: flex;
  align-items: center;
  gap: 19px;
  padding-left: 28px;
  white-space: nowrap;
}
.dd-hover { background: #e9eaf3; }
.callout { position: absolute; z-index: 3; border: 5px solid #f00; }
.callout-tab { left: 1459px; top: 67px; width: 148px; height: 70px; border-radius: 2px; }
.callout-menu { left: 671px; top: 141px; width: 483px; height: 276px; }
```
